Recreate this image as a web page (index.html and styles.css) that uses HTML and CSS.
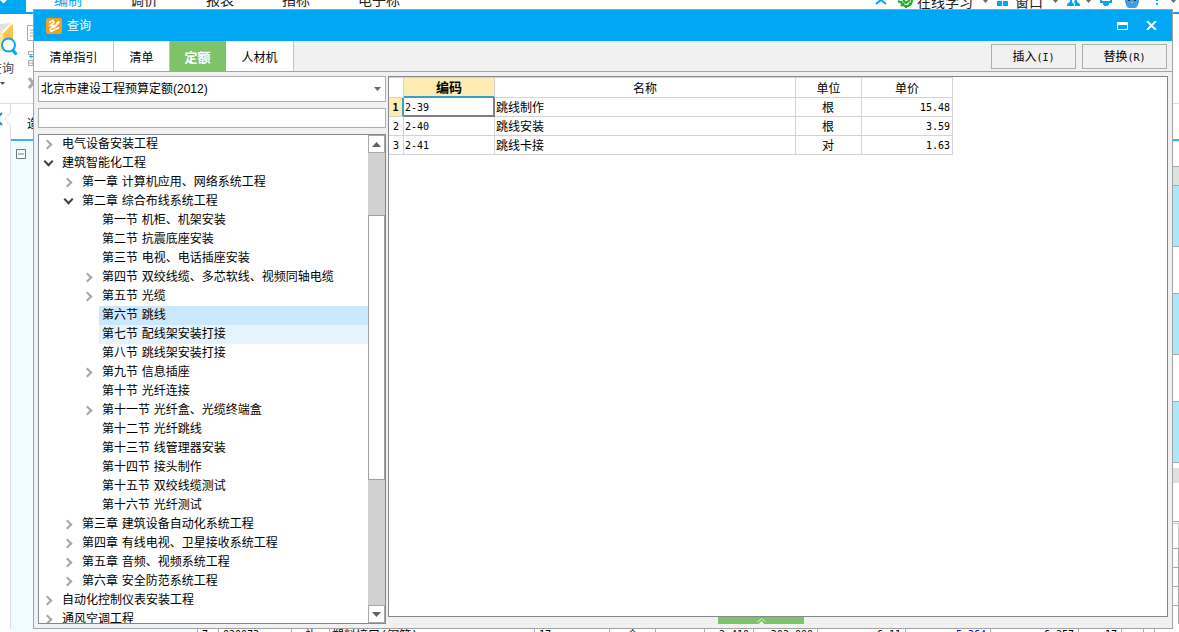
FILE: index.html
```html
<!DOCTYPE html>
<html lang="zh-CN">
<head>
<meta charset="utf-8">
<title>查询</title>
<link rel="stylesheet" href="styles.css">
</head>
<body>
<div class="app">
  <header class="menubar">
    <div class="app-corner"><svg width="10" height="6" viewBox="0 0 10 6"><path d="M0 0h7L3.500 3.500z" fill="#fff"/></svg></div>
    <nav class="menus">
      <a class="menu current" href="#">编制</a>
      <a class="menu" href="#">调价</a>
      <a class="menu" href="#">报表</a>
      <a class="menu" href="#">指标</a>
      <a class="menu" href="#">电子标</a>
    </nav>
    <div class="tools">
      <svg class="collapse" width="12" height="5" viewBox="0 0 12 5"><path d="M1 4L6 0l5 4" fill="none" stroke="#00a8f3" stroke-width="2"/></svg>
      <svg class="learn" width="18" height="8" viewBox="0 0 18 8"><path d="M1 1l4 2M4 1c1 4 4 6 7 5s4-3 4-6" fill="none" stroke="#18b01c" stroke-width="2"/><path d="M4 6l3-3M9 8V5M14 5l-2-2M6 0l3 3 4-3" stroke="#18b01c" stroke-width="2" fill="none"/></svg>
      <span class="tool-text">在线学习</span>
      <svg class="drop wide" width="5" height="4"><path d="M0 0h5L2.500 3z" fill="#666"/></svg>
      <svg class="windows" width="12" height="6"><path d="M0 1h5v5H0zM6 1h5v5H6z" fill="#00a8f3"/></svg>
      <span class="tool-text">窗口</span>
      <svg class="drop wide" width="5" height="4"><path d="M0 0h5L2.500 3z" fill="#666"/></svg>
      <svg class="people" width="14" height="6" viewBox="0 0 14 6"><path d="M0 6c0-3 1-3 3-4V0h2v2l2 2v2zM8 0h2v2c2 1 3 1 3 4H8V4L7 2z" fill="#00a8f3"/></svg>
      <svg class="drop" width="5" height="4"><path d="M0 0h5L2.500 3z" fill="#666"/></svg>
      <svg class="bell" width="12" height="6" viewBox="0 0 12 6"><path d="M1 0v2h10V0M4 3h4v1L6 6 4 4z" fill="none" stroke="#00a8f3" stroke-width="2"/></svg>
      <svg class="mascot" width="14" height="8" viewBox="0 0 14 8"><path d="M0 0h14c0 4-2 8-4 8H4C2 8 0 4 0 0z" fill="#3a9ef0"/><path d="M3 0h2v1H3zM9 0h2v1H9z" fill="#235"/><path d="M6 2h2v1H6z" fill="#e9b56b"/></svg>
      <svg class="more" width="3" height="5"><path d="M0 0h2v1H0zM0 3h2v2H0z" fill="#00a8f3"/></svg>
      <svg class="drop end" width="5" height="4"><path d="M0 0h5L2.500 3z" fill="#666"/></svg>
    </div>
  </header>

  <section class="ribbon">
    <div class="ribbon-query">
      <svg width="18" height="34" viewBox="0 0 18 34"><path d="M0 4l11-3v27H0z" fill="#ffe08a"/><path d="M5 8l8-7v27H0V10z" fill="#fdc54a"/><path d="M0 8l7-7M1 11l9-9" stroke="#fff" stroke-width="2"/><path d="M0 1l10-1-8 8H0z" fill="#dde4e8"/><path d="M0 10h3v18H0z" fill="#ffe79d"/><circle cx="8.500" cy="22" r="6.500" fill="#fff" stroke="#00a8f3" stroke-width="2"/><path d="M12.500 27l4 4.500" stroke="#00a8f3" stroke-width="3"/></svg>
      <span class="ribbon-label">查询</span>
      <svg class="ribbon-drop" width="5" height="4"><path d="M0 0h5L2.500 3z" fill="#555"/></svg>
    </div>
    <svg class="ribbon-icons" width="8" height="66" viewBox="0 0 8 66"><g fill="none" stroke="#aaa"><path d="M8 .5H.5v15H8M3 5h5M3 8h5M3 11h5"/><path d="M8 26.500H1.500v3H8M8 35.500H1.500v5H8M1 38h7M6 36v5"/><path d="M2 53l8 10M2 63l8-10" stroke-width="3"/></g><path d="M2 31.500h4M4 29.500v4" stroke="#18a7d8"/></svg>
  </section>

  <section class="doc-tabs">
    <svg width="11" height="37" viewBox="0 0 11 37"><path d="M10.500 0v9l-6 6 6 6v16" fill="none" stroke="#ddd"/><path d="M2 9l-4 4M2 21l-4-4" stroke="#1695c4" stroke-width="2"/></svg>
    <span class="doc-name">造价分析</span>
  </section>

  <main class="workspace">
    <div class="gutter"></div>
    <div class="outline"><svg width="10" height="10"><path d="M.5.500h9v9h-9zM2 5h6" fill="#fff" stroke="#6e7c80"/></svg></div>
    <div class="side-rows">
      <div class="seg blank"></div>
      <div class="seg head"></div>
      <div class="seg hot"></div>
      <div class="seg cold"></div>
      <div class="seg hot"></div>
      <div class="seg cold"></div>
      <div class="seg hot"></div>
      <div class="seg thin"></div>
      <div class="seg scroll"></div>
      <div class="seg space"></div>
      <div class="seg accent"></div>
      <div class="seg cell tall"></div>
      <div class="seg cell"></div>
      <div class="seg cell"></div>
      <div class="seg cell"></div>
      <div class="seg cell"></div>
    </div>
  </main>

  <div class="detail-row">
    <span>7</span><span>020073</span><span class="mid">补</span><span class="name">塑料接口(钢管)</span><span>17</span><span class="mid">个</span><span></span><span class="num">2.410</span><span class="num">302.000</span><span class="num">6.11</span><span class="num link">5.364</span><span class="num">6.257</span><span class="num">17</span><span></span><span></span><span></span>
  </div>
</div>

<div class="dialog" role="dialog" aria-label="查询">
  <div class="titlebar">
    <svg width="16" height="16" viewBox="0 0 16 16"><rect width="16" height="16" rx="2" fill="#f7a01f"/><path d="M3 4.500l4-2 1 2-4 3h4l-4 4 1 2 8-4" fill="none" stroke="#fff" stroke-width="1.500"/><path d="M8 8l4-5 2 1-5 6-2 1z" fill="#fff"/></svg>
    <h1 class="title">查询</h1>
    <button class="win-button" aria-label="最大化"><svg width="11" height="8"><path d="M.5.500h10v7H.5z" fill="none" stroke="#fff"/><path d="M0 0h11v3H0z" fill="#fff"/></svg></button>
    <button class="win-button" aria-label="关闭"><svg width="11" height="9" viewBox="0 0 11 9"><path d="M1 0l9 9M10 0L1 9" stroke="#fff" stroke-width="2"/></svg></button>
  </div>

  <div class="toolbar">
    <div class="tabs" role="tablist">
      <button class="tab first" role="tab">清单指引</button>
      <button class="tab" role="tab">清单</button>
      <button class="tab active" role="tab" aria-selected="true">定额</button>
      <button class="tab last" role="tab">人材机</button>
    </div>
    <div class="actions">
      <button class="action">插入<span class="latin">(I)</span></button>
      <button class="action">替换<span class="latin">(R)</span></button>
    </div>
  </div>

  <div class="content">
    <div class="left-pane">
      <div class="combo">
        <select class="combo-select" aria-label="定额库"><option>北京市建设工程预算定额(2012)</option></select>
        <svg class="combo-arrow" width="7" height="4"><path d="M0 0h7L3.500 4z" fill="#666"/></svg>
      </div>
      <input class="search" type="text" aria-label="搜索">
      <div class="tree-box">
        <ul class="tree" role="tree">
          <li class="node closed"><span>电气设备安装工程</span></li>
          <li class="node open"><span>建筑智能化工程</span></li>
          <li class="node l2 closed"><span>第一章 计算机应用、网络系统工程</span></li>
          <li class="node l2 open"><span>第二章 综合布线系统工程</span></li>
          <li class="node l3"><span>第一节 机柜、机架安装</span></li>
          <li class="node l3"><span>第二节 抗震底座安装</span></li>
          <li class="node l3"><span>第三节 电视、电话插座安装</span></li>
          <li class="node l3 closed"><span>第四节 双绞线缆、多芯软线、视频同轴电缆</span></li>
          <li class="node l3 closed"><span>第五节 光缆</span></li>
          <li class="node l3 selected"><span>第六节 跳线</span></li>
          <li class="node l3 hover"><span>第七节 配线架安装打接</span></li>
          <li class="node l3"><span>第八节 跳线架安装打接</span></li>
          <li class="node l3 closed"><span>第九节 信息插座</span></li>
          <li class="node l3"><span>第十节 光纤连接</span></li>
          <li class="node l3 closed"><span>第十一节 光纤盒、光缆终端盒</span></li>
          <li class="node l3"><span>第十二节 光纤跳线</span></li>
          <li class="node l3"><span>第十三节 线管理器安装</span></li>
          <li class="node l3"><span>第十四节 接头制作</span></li>
          <li class="node l3"><span>第十五节 双绞线缆测试</span></li>
          <li class="node l3"><span>第十六节 光纤测试</span></li>
          <li class="node l2 closed"><span>第三章 建筑设备自动化系统工程</span></li>
          <li class="node l2 closed"><span>第四章 有线电视、卫星接收系统工程</span></li>
          <li class="node l2 closed"><span>第五章 音频、视频系统工程</span></li>
          <li class="node l2 closed"><span>第六章 安全防范系统工程</span></li>
          <li class="node closed"><span>自动化控制仪表安装工程</span></li>
          <li class="node closed"><span>通风空调工程</span></li>
        </ul>
        <div class="scrollbar">
          <button class="scroll-button" aria-label="向上"><svg width="9" height="5"><path d="M0 5h9L4.500 0z" fill="#5f6368"/></svg></button>
          <div class="track before"></div>
          <div class="thumb"></div>
          <div class="track after"></div>
          <button class="scroll-button" aria-label="向下"><svg width="9" height="5"><path d="M0 0h9L4.500 5z" fill="#5f6368"/></svg></button>
        </div>
      </div>
    </div>

    <div class="right-pane">
      <div class="grid-box">
        <table class="grid">
          <colgroup><col class="c-no"><col class="c-code"><col class="c-name"><col class="c-unit"><col class="c-price"></colgroup>
          <thead>
            <tr><th></th><th class="active-col">编码</th><th>名称</th><th>单位</th><th>单价</th></tr>
          </thead>
          <tbody>
            <tr><th class="latin active-row">1</th><td class="latin focus">2-39</td><td>跳线制作</td><td class="mid">根</td><td class="latin num">15.48</td></tr>
            <tr><th class="latin">2</th><td class="latin">2-40</td><td>跳线安装</td><td class="mid">根</td><td class="latin num">3.59</td></tr>
            <tr><th class="latin">3</th><td class="latin">2-41</td><td>跳线卡接</td><td class="mid">对</td><td class="latin num">1.63</td></tr>
          </tbody>
        </table>
      </div>
      <button class="expander" aria-label="展开"><svg width="9" height="6" viewBox="0 0 9 6"><path d="M.5 4l4-3.500 4 3.500" fill="none" stroke="#d6edcf"/><path d="M2 6l2.500-3L7 6z" fill="#fff"/></svg></button>
    </div>
  </div>
</div>
</body>
</html>
```

FILE: styles.css
```css
*, *::before { box-sizing: border-box; }

body {
  margin: 0;
  height: 100vh;
  overflow: hidden;
  position: relative;
  background: #fff;
  color: #000;
  font: 12px/19px "DejaVu Sans", "Noto Sans CJK SC", sans-serif;
}

button, input, select {
  font: inherit;
  color: inherit;
  margin: 0;
  padding: 0;
  border: 0;
  border-radius: 0;
  background: none;
}

svg { display: block; flex: none; }

.latin { font-family: "DejaVu Sans Mono", monospace; font-size: 10px; }
.mid { text-align: center; }
.num { text-align: right; }
.link { color: #00f; }

/* Main window behind the dialog */
.app { height: 100vh; display: flex; flex-direction: column; }

.menubar {
  height: 14px;
  flex: none;
  display: flex;
  overflow: hidden;
  border-bottom: 2px solid #00a8f3;
  font-size: 14px;
  line-height: 16px;
}
.app-corner { width: 26px; background: #00a8f3; }
.menus {
  display: flex;
  align-items: flex-end;
  gap: 48px;
  padding: 0 0 4px 28px;
}
.menu { color: #222; text-decoration: none; white-space: nowrap; }
.menu.current { color: #00a8f3; }
.tools { margin-left: auto; display: flex; align-items: flex-start; }
.tool-text { align-self: flex-end; padding-bottom: 2px; color: #222; }
.collapse { margin-right: 10px; }
.learn { margin-right: 2px; }
.drop { margin-right: 9px; }
.drop.wide { margin-left: 10px; }
.drop.end { margin-right: 3px; }
.windows { margin-right: 6px; }
.people { margin-right: 5px; }
.bell { margin-right: 13px; }
.mascot { margin-right: 17px; }
.more { margin-right: 12px; }

.ribbon {
  height: 90px;
  flex: none;
  display: flex;
  gap: 9px;
  border-bottom: 1px solid #ddd;
}
.ribbon-query {
  width: 18px;
  padding-top: 9px;
  display: flex;
  flex-direction: column;
}
.ribbon-label { align-self: flex-end; padding: 3px 4px 3px 0; white-space: nowrap; color: #444; }
.ribbon-icons { margin-top: 11px; }

.doc-tabs { height: 37px; flex: none; display: flex; }
.doc-name { flex: 1; padding: 11px 0 0 16px; border-bottom: 2px solid #3db4e6; }

.workspace { flex: 1; min-height: 0; display: flex; overflow: hidden; }
.gutter { width: 11px; border-right: 1px solid #ddd; }
.outline { width: 186px; padding: 8px 5px; background: #f0fcff; }
.side-rows { width: 6px; margin-left: auto; }
.seg { height: 19px; border-top: 1px solid #aaa; }
.seg.blank { height: 25px; border-color: #ddd; }
.seg.head { background: #dae3dd; }
.seg.hot { height: 61px; background: #a9e8fb; }
.seg.cold { height: 47px; }
.seg.thin { height: 6px; }
.seg.scroll { height: 15px; border: 0; background: #e0e0e0; }
.seg.space { height: 38px; border: 0; }
.seg.accent { height: 2px; border-color: #7bc46c; }
.seg.cell { border-right: 1px solid #aaa; }
.seg.tall { height: 25px; border-color: #ccc; }

.detail-row {
  height: 3px;
  flex: none;
  overflow: hidden;
  padding-left: 197px;
  background: linear-gradient(90deg, #fff 11px, #f0fcff 11px, #f0fcff 197px, #fff 197px);
  display: grid;
  grid-template-columns: 21px 73px 38px 205px 75px 46px 49px 49px 64px 88px 85px 88px 43px 22px 11px 1fr;
  font: 10px/11px "DejaVu Sans Mono", "Noto Sans CJK SC", monospace;
}
.detail-row span { height: 15px; padding: 0 4px; border-left: 1px solid #aaa; white-space: nowrap; }
.detail-row .name { padding: 0 2px; font-size: 12px; line-height: 15px; }

/* Query dialog */
.dialog {
  position: absolute;
  inset: 9px 6px 3px 33px;
  display: flex;
  flex-direction: column;
  border: 1px solid #a3a3a3;
  background: #f1f1f1;
}
.titlebar {
  height: 31px;
  flex: none;
  display: flex;
  align-items: center;
  padding: 0 15px 0 12px;
  background: #00a8f3;
  color: #fff;
}
.title { margin: 0 auto 0 5px; padding-top: 2px; font-size: 12px; font-weight: normal; }
.win-button { margin-left: 18px; }

.toolbar {
  height: 31px;
  flex: none;
  display: flex;
  justify-content: space-between;
  border-bottom: 1px solid #7bc46c;
}
.tabs { display: flex; }
.tab {
  width: 56px;
  padding-top: 4px;
  border-right: 1px solid #a8dc9c;
  background: #fff;
}
.tab.first { width: 80px; }
.tab.last { width: 68px; }
.tab.active { padding-top: 2px; border-color: #80c269; background: #80c269; color: #fff; font-size: 13px; font-weight: bold; }
.actions { display: flex; gap: 6px; padding: 3px 5px 2px 0; }
.action { width: 85px; padding-top: 2px; border: 1px solid #adadad; background: #f1f1f1; }

.content {
  flex: 1;
  min-height: 0;
  display: flex;
  gap: 2px;
  padding: 4px;
}
.left-pane { width: 348px; flex: none; display: flex; flex-direction: column; gap: 6px; }
.combo {
  height: 26px;
  flex: none;
  display: flex;
  align-items: center;
  border: 1px solid #adadad;
  background: #fff;
}
.combo-select {
  flex: 1;
  height: 24px;
  padding: 1px 0 0 2px;
  appearance: none;
  outline: 0;
  font-family: "Liberation Sans", "Noto Sans CJK SC", sans-serif;
}
.combo-arrow { margin-right: 4px; }
.search { height: 20px; flex: none; border: 1px solid #adadad; background: #fff; }

.tree-box { flex: 1; min-height: 0; display: flex; border: 1px solid #828790; background: #fff; }
.tree { flex: 1; margin: 0; padding: 0; list-style: none; overflow: hidden; }
.node { height: 19px; display: flex; }
.node::before { content: ""; width: 20px; flex: none; }
.node span { flex: 1; padding-left: 3px; white-space: nowrap; }
.l2 { padding-left: 20px; }
.l3 { padding-left: 40px; }
.selected span { background: #cce8ff; }
.hover span { background: #e5f3ff; }
.node.closed::before, .node.open::before {
  width: 7px;
  height: 7px;
  border: solid #a6a6a6;
  border-width: 2px 2px 0 0;
  transform: rotate(45deg);
  margin: 6px 8px 0 5px;
}
.node.open::before { border-color: #404040; transform: rotate(135deg); margin: 4px 7px 0 6px; }

.scrollbar { width: 17px; flex: none; display: flex; flex-direction: column; background: #d1d1d1; }
.scroll-button {
  height: 18px;
  flex: none;
  display: flex;
  align-items: center;
  justify-content: center;
  border: 1px solid #a8a8a8;
  background: #fff;
}
.track.before { flex: 62; }
.thumb { flex: 265; border: 1px solid #a0a0a0; background: #fff; }
.track.after { flex: 126; }

.right-pane { flex: 1; min-width: 0; display: flex; flex-direction: column; }
.grid-box { flex: 1; min-height: 0; border: 1px solid #828790; background: #fff; overflow: hidden; }
.grid { width: 564px; table-layout: fixed; border-collapse: separate; border-spacing: 0; line-height: 16px; }
.c-no { width: 15px; }
.c-code { width: 91px; }
.c-name { width: 301px; }
.c-unit { width: 66px; }
.c-price { width: 91px; }
.grid th, .grid td {
  height: 19px;
  padding: 2px 2px 0 1px;
  border: solid #d3d3d3;
  border-width: 0 1px 1px 0;
  white-space: nowrap;
}
.grid th { padding: 2px 0 0; font-weight: normal; text-align: center; }
.grid thead th { height: 21px; border-top-width: 1px; }
.grid thead .active-col { border-bottom: 2px solid #35a0cc; background: #ffecb3; font-size: 13px; font-weight: bold; }
.grid tbody .active-row { border-right: 2px solid #35a0cc; background: #ffecb3; font-weight: bold; }
.grid tbody .focus { border-color: #808080; border-width: 0 2px 2px 0; line-height: 15px; }

.expander {
  width: 86px;
  height: 7px;
  flex: none;
  margin-left: 330px;
  background: #80c269;
  display: flex;
  justify-content: center;
}
.expander svg { margin-top: 1px; }
```
